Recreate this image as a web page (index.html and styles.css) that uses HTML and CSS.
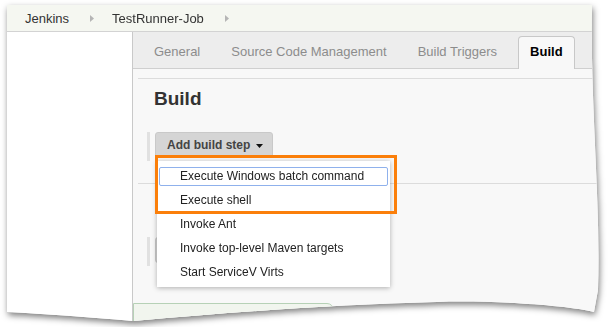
FILE: index.html
```html
<!DOCTYPE html>
<html lang="en">
<head>
	<meta charset="UTF-8">
	<title>TestRunner-Job - Configure</title>
	<link rel="stylesheet" href="styles.css">
</head>
<body>
<div class="page">
	<div class="sheet">
		<div class="crumbs">
			<span class="crumb">Jenkins</span>
			<svg class="sep" width="4" height="7" viewBox="0 0 4 7"><path d="M0 0 L4 3.5 L0 7 Z" fill="#b5b5b5"/></svg>
			<span class="crumb">TestRunner-Job</span>
			<svg class="sep" width="4" height="7" viewBox="0 0 4 7"><path d="M0 0 L4 3.5 L0 7 Z" fill="#b5b5b5"/></svg>
		</div>
		<div class="layout">
			<div class="side"></div>
			<div class="main">
				<div class="tabs">
					<div class="tab">General</div>
					<div class="tab">Source Code Management</div>
					<div class="tab">Build Triggers</div>
					<div class="tab active">Build</div>
				</div>
				<div class="section">
					<h2 class="section-title">Build</h2>
					<div class="step-row">
						<div class="step-bar"></div>
						<div class="dropdown">
							<div class="btn">Add build step
								<svg class="caret" width="7" height="4" viewBox="0 0 7 4"><path d="M0 0 H7 L3.5 4 Z" fill="#111"/></svg>
							</div>
							<div class="menu">
								<div class="menu-item focused">Execute Windows batch command</div>
								<div class="menu-item">Execute shell</div>
								<div class="menu-item">Invoke Ant</div>
								<div class="menu-item">Invoke top-level Maven targets</div>
								<div class="menu-item">Start ServiceV Virts</div>
							</div>
							<div class="callout"></div>
						</div>
					</div>
				</div>
				<div class="section post">
					<div class="step-row">
						<div class="step-bar"></div>
						<div class="btn btn-blank"></div>
					</div>
				</div>
				<div class="footer-box"></div>
			</div>
		</div>
	</div>
</div>
</body>
</html>
```

FILE: styles.css
```css
body {
	margin: 0;
	background: #fff;
	font-family: "Liberation Sans", Arial, sans-serif;
}
.page {
	padding: 5px 0 0 7px;
	filter: drop-shadow(1px 3px 3px rgba(0, 0, 0, 0.5));
}
.sheet {
	width: 593px;
	height: 322px;
	overflow: hidden;
	background: #fff;
	display: flex;
	flex-direction: column;
	clip-path: path("M0 0 L585 0 C583 100 594 200 591 285 L587 307 C560 300 480 295 430 297 C330 300 250 305 126 316 C80 312 40 309 0 307 Z");
}
.crumbs {
	height: 26px;
	flex: none;
	border-bottom: 1px solid #d3d3d3;
	background: #f5f7f1;
	display: flex;
	align-items: center;
	padding-left: 18px;
	font-size: 13px;
	color: #333;
}
.sep {
	margin: 0 18px 0 21px;
}
.layout {
	flex: 1;
	display: flex;
}
.side {
	width: 125px;
	flex: none;
	border-right: 1px solid #c9c9c9;
	background: #fff;
}
.main {
	flex: 1;
	background: #f8f8f8;
}
.tabs {
	height: 37px;
	box-sizing: border-box;
	padding: 4px 0 0 8px;
	border-bottom: 1px solid #cfcfcf;
	background: #ededed;
	display: flex;
	align-items: flex-end;
	gap: 5px;
}
.tab {
	height: 32px;
	box-sizing: border-box;
	padding: 0 12px;
	border: 1px solid transparent;
	border-bottom: none;
	line-height: 30px;
	font-size: 13px;
	color: #8c8c8c;
	white-space: nowrap;
}
.tab.active {
	height: 33px;
	margin: 0 0 -1px 3px;
	padding: 0 11px;
	border-color: #c8c8c8;
	border-radius: 4px 4px 0 0;
	background: #f8f8f8;
	color: #000;
	font-weight: bold;
}
.section {
	margin: 9px 0 0 5px;
	padding: 9px 0 22px;
	border-top: 1px solid #dcdcdc;
}
.section.post {
	margin-top: 0;
	padding: 53px 0 0;
}
.section-title {
	margin: 0 0 22px 16px;
	font-size: 19px;
	line-height: 22px;
	color: #333;
}
.step-row {
	display: flex;
	align-items: flex-start;
	padding-left: 9px;
	height: 29px;
}
.step-bar {
	width: 3px;
	height: 29px;
	background: #e1e1e1;
	margin-right: 5px;
}
.dropdown {
	position: relative;
}
.btn {
	height: 26px;
	box-sizing: border-box;
	padding: 0 9px 0 11px;
	border: 1px solid #c9c9c9;
	border-radius: 3px;
	background: #d5d5d5;
	display: flex;
	align-items: center;
	gap: 6px;
	font-size: 12px;
	font-weight: bold;
	color: #444;
	white-space: nowrap;
}
.btn-blank {
	width: 150px;
}
.caret {
	margin-top: 1px;
}
.menu {
	position: absolute;
	left: 2px;
	top: 29px;
	width: 233px;
	padding: 3px 0;
	background: #fff;
	box-shadow: 0 1px 5px rgba(0, 0, 0, 0.3);
	z-index: 2;
}
.menu-item {
	height: 24px;
	line-height: 24px;
	padding-left: 23px;
	font-size: 12px;
	color: #222;
	white-space: nowrap;
}
.menu-item.focused {
	height: 19px;
	box-sizing: border-box;
	margin: 3px 2px 2px;
	padding-left: 20px;
	line-height: 17px;
	border: 1px solid #8fb1ec;
	border-radius: 2px;
}
.callout {
	position: absolute;
	left: 0;
	top: 23px;
	width: 242px;
	height: 59px;
	box-sizing: border-box;
	border: 3px solid #fb7f0a;
	z-index: 3;
}
.footer-box {
	margin-top: 37px;
	width: 199px;
	height: 40px;
	border: 1px solid #b6d1b6;
	border-radius: 0 7px 0 0;
	background: #f1f5ee;
}
```
